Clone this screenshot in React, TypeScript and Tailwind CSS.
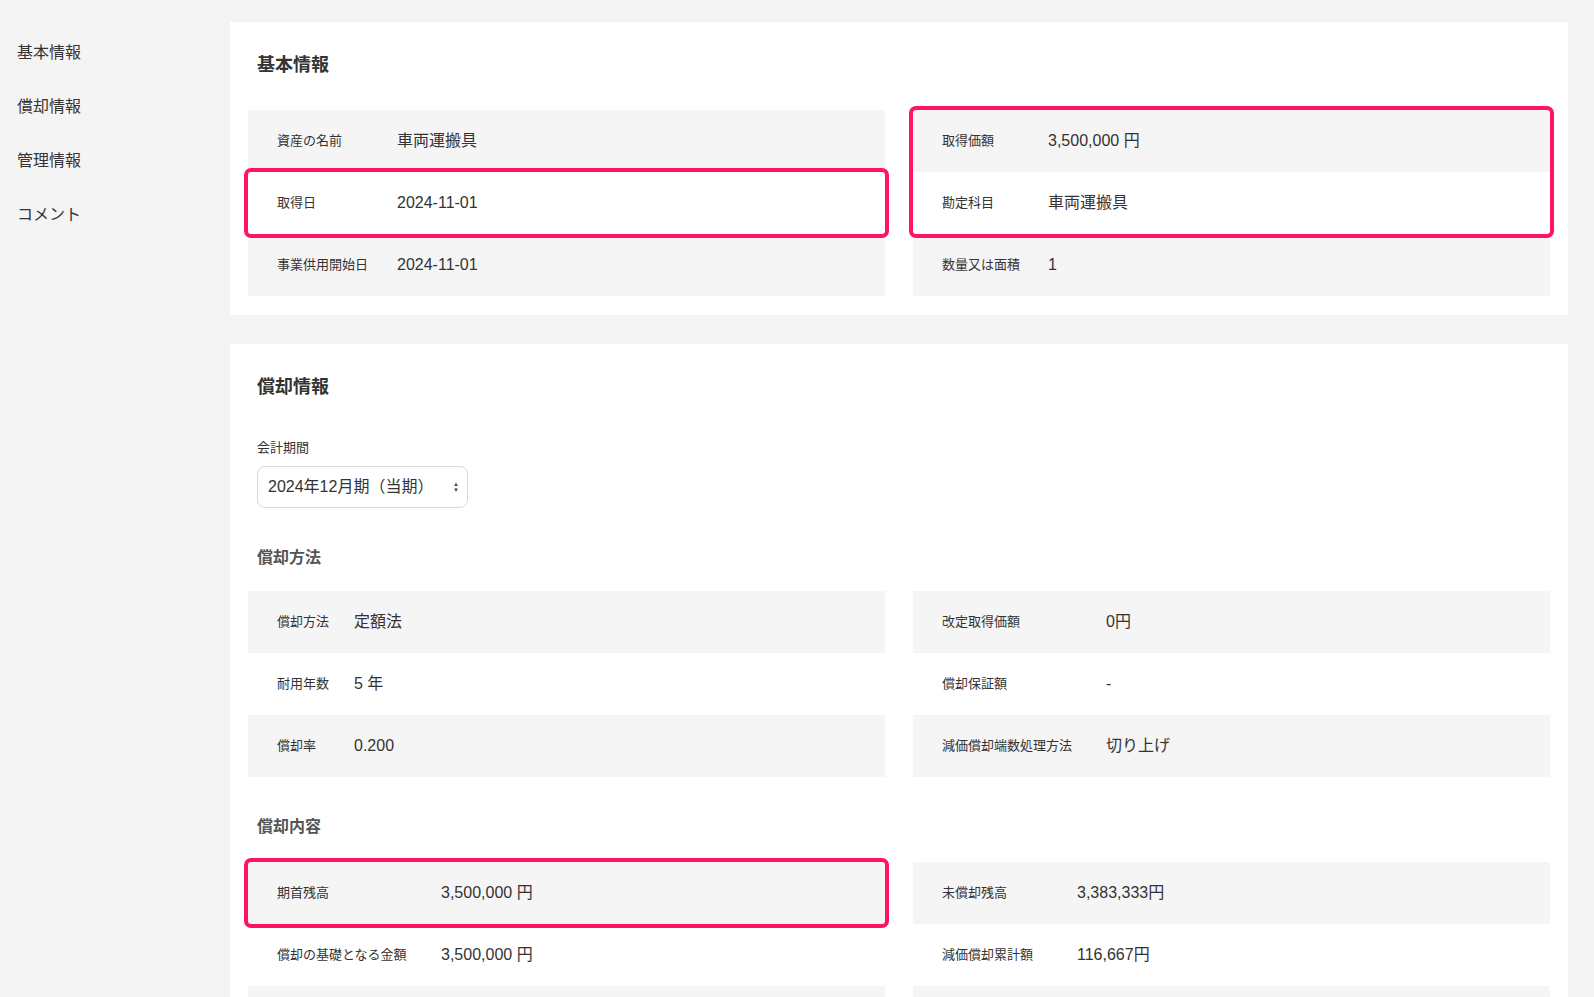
import React from "react";

type Row = { label: string; value: string };

const Hl = () => (
  <div className="pointer-events-none absolute -inset-[4px] rounded-[7px] border-[4px] border-[#ff1460]" />
);

function Cell({ r, lw, gray }: { r: Row; lw: number; gray: boolean }) {
  return (
    <div className={`flex h-[62px] items-center pl-[29px] ${gray ? "bg-[#f6f5f6]" : "bg-white"}`}>
      <span className="shrink-0 text-[13px] text-[#333]" style={{ width: lw }}>
        {r.label}
      </span>
      <span className="text-[16px] text-[#333]">{r.value}</span>
    </div>
  );
}

function Column({ rows, lw, hl }: { rows: Row[]; lw: number; hl?: number[] }) {
  const set = hl ?? [];
  const out: React.ReactNode[] = [];
  let i = 0;
  while (i < rows.length) {
    if (set.includes(i)) {
      const group: number[] = [];
      while (i < rows.length && set.includes(i)) group.push(i++);
      out.push(
        <div key={group[0]} className="relative">
          {group.map((g) => (
            <Cell key={g} r={rows[g]} lw={lw} gray={g % 2 === 0} />
          ))}
          <Hl />
        </div>
      );
    } else {
      out.push(<Cell key={i} r={rows[i]} lw={lw} gray={i % 2 === 0} />);
      i++;
    }
  }
  return <div className="flex flex-col">{out}</div>;
}

export default function App() {
  return (
    <div
      className="flex min-h-screen bg-[#f5f4f5] text-[#333]"
      style={{ fontFamily: '"Liberation Sans", "Noto Sans CJK JP", sans-serif' }}
    >
      <nav className="flex w-[230px] shrink-0 flex-col gap-[30px] pl-[17px] pt-[41px] text-[16px]">
        <span>基本情報</span>
        <span>償却情報</span>
        <span>管理情報</span>
        <span>コメント</span>
      </nav>
      <main className="mr-[26px] flex flex-1 flex-col gap-[29px] pt-[22px]">
        <section className="bg-white px-[18px] pb-[19px] pt-[30px]">
          <h2 className="mb-[31px] pl-[9px] text-[18px] font-bold">基本情報</h2>
          <div className="grid grid-cols-2 gap-7">
            <Column
              lw={120}
              hl={[1]}
              rows={[
                { label: "資産の名前", value: "車両運搬具" },
                { label: "取得日", value: "2024-11-01" },
                { label: "事業供用開始日", value: "2024-11-01" },
              ]}
            />
            <Column
              lw={106}
              hl={[0, 1]}
              rows={[
                { label: "取得価額", value: "3,500,000 円" },
                { label: "勘定科目", value: "車両運搬具" },
                { label: "数量又は面積", value: "1" },
              ]}
            />
          </div>
        </section>
        <section className="bg-white px-[18px] pb-8 pt-[30px]">
          <h2 className="mb-[37px] pl-[9px] text-[18px] font-bold">償却情報</h2>
          <div className="pl-[9px]">
            <div className="mb-[8px] text-[13px]">会計期間</div>
            <div className="flex h-[42px] w-[211px] items-center justify-between rounded-lg border border-[#d9d9d9] pl-[10px] pr-2 text-[16px]">
              <span>2024年12月期（当期）</span>
              <span className="flex flex-col text-[6px] leading-[6px] text-[#444]">
                <span>▲</span>
                <span>▼</span>
              </span>
            </div>
            <h3 className="mb-[21px] mt-[38px] text-[16px] font-bold text-[#555]">償却方法</h3>
          </div>
          <div className="grid grid-cols-2 gap-7">
            <Column
              lw={77}
              rows={[
                { label: "償却方法", value: "定額法" },
                { label: "耐用年数", value: "5 年" },
                { label: "償却率", value: "0.200" },
              ]}
            />
            <Column
              lw={164}
              rows={[
                { label: "改定取得価額", value: "0円" },
                { label: "償却保証額", value: "-" },
                { label: "減価償却端数処理方法", value: "切り上げ" },
              ]}
            />
          </div>
          <h3 className="mb-[23px] mt-[38px] pl-[9px] text-[16px] font-bold text-[#555]">償却内容</h3>
          <div className="grid grid-cols-2 gap-7">
            <Column
              lw={164}
              hl={[0]}
              rows={[
                { label: "期首残高", value: "3,500,000 円" },
                { label: "償却の基礎となる金額", value: "3,500,000 円" },
                { label: "", value: "" },
              ]}
            />
            <Column
              lw={135}
              rows={[
                { label: "未償却残高", value: "3,383,333円" },
                { label: "減価償却累計額", value: "116,667円" },
                { label: "", value: "" },
              ]}
            />
          </div>
        </section>
      </main>
    </div>
  );
}
